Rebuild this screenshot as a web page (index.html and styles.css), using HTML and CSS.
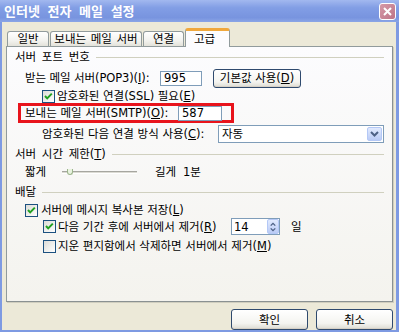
FILE: index.html
```html
<!DOCTYPE html>
<html lang="ko">
<head>
    <meta charset="UTF-8">
    <title>인터넷 전자 메일 설정</title>
    <link rel="stylesheet" href="styles.css">
</head>
<body>
    <div class="window">
        <div class="titlebar">
            <span class="title">인터넷 전자 메일 설정</span>
            <span class="close">
                <svg width="9" height="9" viewBox="0 0 9 9"><path d="M1 1L8 8M8 1L1 8" stroke="#fff" stroke-width="2"/></svg>
            </span>
        </div>

        <div class="content">
            <div class="tabs">
                <div class="tab tab-general">일반</div>
                <div class="tab tab-outgoing">보내는 메일 서버</div>
                <div class="tab tab-conn">연결</div>
                <div class="tab tab-adv active">고급</div>
            </div>

            <div class="panel">
                <!-- 서버 포트 번호 -->
                <div class="group-title g1"><span>서버 포트 번호</span><i class="rule"></i></div>
                <div class="row pop3">
                    <span class="lbl lbl-pop">받는 메일 서버(POP3)(<u>I</u>):</span>
                    <span class="textbox tb-pop">995</span>
                    <span class="btn btn-default">기본값 사용(<u>D</u>)</span>
                </div>
                <div class="row ssl">
                    <span class="check on"></span>
                    <span>암호화된 연결(SSL) 필요(<u>E</u>)</span>
                </div>
                <div class="row smtp">
                    <div class="highlight">
                        <span class="lbl lbl-smtp">보내는 메일 서버(SMTP)(<u>O</u>):</span>
                        <span class="textbox tb-smtp">587</span>
                    </div>
                </div>
                <div class="row enc">
                    <span class="lbl lbl-enc">암호화된 다음 연결 방식 사용(<u>C</u>):</span>
                    <span class="select">
                        <span class="select-text">자동</span>
                        <span class="select-btn">
                            <svg width="9" height="6" viewBox="0 0 9 6"><path d="M1 1L4.5 4.5L8 1" fill="none" stroke="#4D6185" stroke-width="2"/></svg>
                        </span>
                    </span>
                </div>

                <!-- 서버 시간 제한 -->
                <div class="group-title g2"><span>서버 시간 제한(<u>T</u>)</span><i class="rule"></i></div>
                <div class="row slider-row">
                    <span class="short">짧게</span>
                    <span class="track"><i class="thumb"></i></span>
                    <span class="long">길게</span>
                    <span>1분</span>
                </div>

                <!-- 배달 -->
                <div class="group-title g3"><span>배달</span><i class="rule"></i></div>
                <div class="row c1">
                    <span class="check on"></span>
                    <span>서버에 메시지 복사본 저장(<u>L</u>)</span>
                </div>
                <div class="row c2">
                    <span class="check on"></span>
                    <span class="lbl lbl-remove">다음 기간 후에 서버에서 제거(<u>R</u>)</span>
                    <span class="spin">
                        <span class="spin-text">14</span>
                        <span class="spin-btns">
                            <svg width="11" height="14" viewBox="0 0 11 14"><path d="M3 5.5L5.5 3L8 5.5M3 8.5L5.5 11L8 8.5" fill="none" stroke="#4D6185" stroke-width="1.5"/></svg>
                        </span>
                    </span>
                    <span class="unit">일</span>
                </div>
                <div class="row c3">
                    <span class="check"></span>
                    <span>지운 편지함에서 삭제하면 서버에서 제거(<u>M</u>)</span>
                </div>
            </div>

            <div class="actions">
                <span class="btn btn-action">확인</span>
                <span class="btn btn-action">취소</span>
            </div>
        </div>
    </div>
</body>
</html>
```

FILE: styles.css
```css
body {
    margin: 0;
    font-family: "DejaVu Sans", "Noto Sans CJK KR", sans-serif;
    font-size: 11.5px;
    line-height: 14px;
    color: #000;
    background: #fff;
}
.window {
    box-sizing: border-box;
    width: 399px;
    height: 332px;
    background-color: #ECE9D8;
    border: solid #7E9AE2;
    border-width: 0 3px 2px 2px;
    display: flex;
    flex-direction: column;
}
.titlebar {
    height: 22px;
    margin: 0 -3px 0 -2px;
    padding: 0 3px 0 4px;
    background: linear-gradient(#A2B8EF, #829EE5 35%, #7894DF 80%, #8AA5E6);
    display: flex;
    align-items: center;
    justify-content: space-between;
}
.title {
    color: #fff;
    font-family: "Noto Sans CJK KR", sans-serif;
    font-weight: 700;
    font-size: 13px;
    word-spacing: 4px;
}
.close {
    box-sizing: border-box;
    width: 17px;
    height: 17px;
    margin-top: 1px;
    border: 1px solid #fff;
    border-radius: 3px;
    background: linear-gradient(135deg, #D59AA8, #BE7487);
    display: flex;
    align-items: center;
    justify-content: center;
}
.content {
    flex: 1;
    padding: 6px 3px 0 4px;
    display: flex;
    flex-direction: column;
}
.tabs {
    height: 18px;
    padding-left: 1px;
    display: flex;
    align-items: flex-end;
    position: relative;
    z-index: 1;
}
.tab {
    box-sizing: border-box;
    height: 15px;
    margin-right: 1px;
    border: 1px solid #919B9C;
    border-bottom: none;
    border-radius: 3px 3px 0 0;
    background: linear-gradient(#FFFFFF, #F3F3EF 60%, #E3E2DA);
    text-align: center;
    line-height: 15px;
    word-spacing: 1px;
}
.tab-general { width: 42px; }
.tab-outgoing { width: 92px; }
.tab-conn { width: 41px; }
.tab-adv { width: 45px; }
.tab.active {
    height: 19px;
    margin-bottom: -1px;
    border-top: 3px solid #F0A83C;
    border-radius: 3px 3px 0 0;
    background: #FCFCFE;
    line-height: 17px;
    padding-right: 6px;
}
.panel {
    box-sizing: border-box;
    height: 256px;
    border: 1px solid #919B9C;
    border-right-color: #8A9192;
    border-bottom-color: #8A9192;
    background: linear-gradient(#FCFCFE, #F4F3EE);
    box-shadow: 1px 1px 0 #D0CEBF;
    display: flex;
    flex-direction: column;
}
.row {
    display: flex;
    align-items: center;
    white-space: nowrap;
}
.group-title {
    display: flex;
    align-items: center;
    padding: 0 8px;
    white-space: nowrap;
    word-spacing: 2px;
}
.group-title .rule {
    flex: 1;
    height: 0;
    margin-left: 6px;
    border-top: 1px solid #D0D0BF;
}
.g1 { height: 20px; }
.g2 { height: 18px; }
.g3 { height: 22px; }

.pop3 { height: 22px; padding-left: 18px; }
.ssl { height: 14px; padding-left: 35px; }
.smtp { height: 20px; padding-left: 11px; }
.enc { height: 22px; padding-left: 35px; }
.slider-row { height: 18px; padding-left: 18px; }
.c1 { height: 14px; padding-left: 18px; }
.c2 { height: 19px; padding-left: 36px; }
.c3 { height: 20px; padding-left: 36px; }

.lbl-pop { width: 135px; letter-spacing: -0.1px; }
.lbl-smtp { width: 153px; }
.lbl-enc { width: 176px; }
.lbl-remove { width: 173px; }

.textbox {
    box-sizing: border-box;
    height: 15px;
    padding-left: 3px;
    border: 1px solid #7F9DB9;
    background: #fff;
    line-height: 13px;
}
.tb-pop { width: 42px; }
.tb-smtp { width: 44px; }

.highlight {
    box-sizing: border-box;
    height: 20px;
    width: 216px;
    padding-left: 4px;
    border: 3px solid #E8141C;
    display: flex;
    align-items: center;
}

.btn {
    box-sizing: border-box;
    display: flex;
    align-items: center;
    justify-content: center;
    border: 1px solid #2F4A6E;
    border-radius: 3px;
    background: linear-gradient(#FFFFFF, #F4F4F0 70%, #DCDBD2);
    box-shadow: inset 0 -1px 0 #D6D0C5;
}
.btn-default {
    width: 88px;
    height: 19px;
    margin-left: 11px;
}

.check {
    box-sizing: border-box;
    width: 13px;
    height: 13px;
    margin-right: 2px;
    border: 1px solid #1C5180;
    background: linear-gradient(135deg, #DCDCD7, #FFFFFF);
    flex: none;
}
.check.on {
    background:
        url("data:image/svg+xml,%3Csvg xmlns='http://www.w3.org/2000/svg' width='11' height='11'%3E%3Cpath d='M2 5l2.2 2.4L8.8 2.6' fill='none' stroke='%2321A121' stroke-width='2'/%3E%3C/svg%3E") center no-repeat,
        linear-gradient(135deg, #DCDCD7, #FFFFFF);
}
.c1 .check { margin-right: 3px; }

.select {
    box-sizing: border-box;
    width: 166px;
    height: 18px;
    border: 1px solid #7F9DB9;
    background: #fff;
    display: flex;
    align-items: center;
    justify-content: space-between;
}
.select-text { padding-left: 3px; }
.select-btn {
    box-sizing: border-box;
    width: 15px;
    height: 14px;
    margin-right: 1px;
    border: 1px solid #B4C8F6;
    border-radius: 2px;
    background: linear-gradient(#E1EAFE, #BACBF5);
    display: flex;
    align-items: center;
    justify-content: center;
}

.short { width: 37px; }
.track {
    position: relative;
    width: 75px;
    height: 1px;
    border-top: 1px solid #A6A6A0;
    border-bottom: 1px solid #fff;
    background: #DCDBD4;
}
.thumb {
    position: absolute;
    left: 5px;
    top: -3px;
    width: 4px;
    height: 5px;
    border: 1px solid #9CB48C;
    border-top: none;
    border-radius: 0 0 3px 3px;
    background: #E9F3E0;
}
.long { margin-left: 18px; width: 28px; }

.spin {
    box-sizing: border-box;
    width: 49px;
    height: 17px;
    border: 1px solid #7F9DB9;
    background: #fff;
    display: flex;
    align-items: center;
    justify-content: space-between;
}
.spin-text { padding-left: 2px; }
.spin-btns {
    box-sizing: border-box;
    width: 12px;
    height: 15px;
    background: linear-gradient(#E1EAFE, #BACBF5);
    border: 1px solid #B4C8F6;
    border-radius: 2px;
    display: flex;
    align-items: center;
    justify-content: center;
}
.unit { margin-left: 11px; }

.actions {
    display: flex;
    justify-content: flex-end;
    gap: 8px;
    padding-top: 7px;
}
.btn-action {
    width: 77px;
    height: 21px;
}
```
